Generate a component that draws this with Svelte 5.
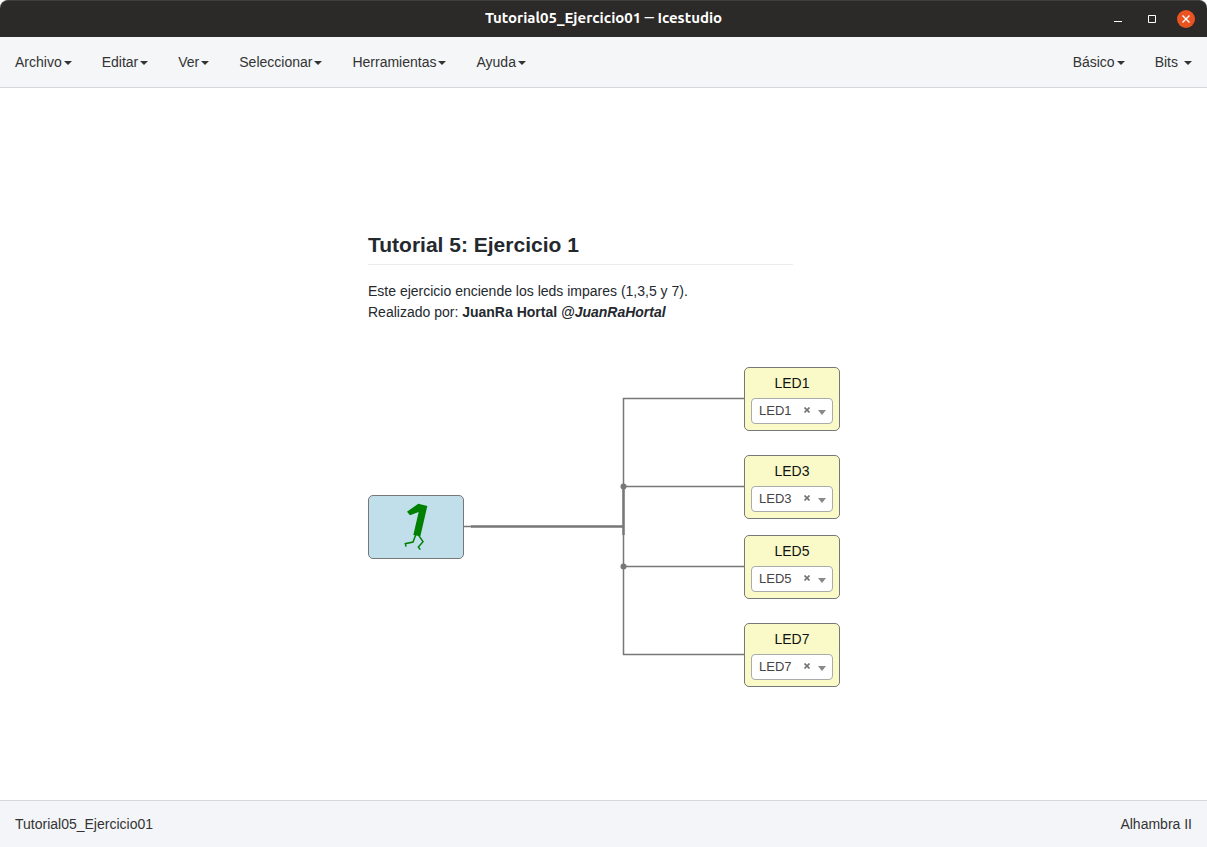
<script>
  const menus = ['Archivo', 'Editar', 'Ver', 'Seleccionar', 'Herramientas', 'Ayuda'];
  const collections = ['Básico', 'Bits'];
  const pins = ['LED1', 'LED3', 'LED5', 'LED7'];

  let outputs = $state([
    { label: 'LED1', pin: 'LED1', x: 744, y: 279 },
    { label: 'LED3', pin: 'LED3', x: 744, y: 367 },
    { label: 'LED5', pin: 'LED5', x: 744, y: 447 },
    { label: 'LED7', pin: 'LED7', x: 744, y: 535 }
  ]);
</script>

<div class="window">
  <header class="titlebar">
    <span></span>
    <h1>Tutorial05_Ejercicio01 ─ Icestudio</h1>
    <div class="controls">
      <button aria-label="Minimizar">
        <svg width="18" height="18" viewBox="0 0 18 18"><path d="M5 11.5h8" stroke="#fff" /></svg>
      </button>
      <button aria-label="Maximizar">
        <svg width="18" height="18" viewBox="0 0 18 18"><path d="M5.5 5.5h7v7h-7z" fill="none" stroke="#fff" /></svg>
      </button>
      <button aria-label="Cerrar">
        <svg width="18" height="18" viewBox="0 0 18 18">
          <circle cx="9" cy="9" r="9" fill="#e95420" />
          <path d="M5.5 5.5l7 7M12.5 5.5l-7 7" stroke="#fff" stroke-width="1.4" />
        </svg>
      </button>
    </div>
  </header>

  <nav class="menubar">
    <div class="menus">
      {#each menus as name}
        <button>{name}<i class="caret"></i></button>
      {/each}
    </div>
    <div class="menus">
      {#each collections as name}
        <button class="collection">{name}<i class="caret"></i></button>
      {/each}
    </div>
  </nav>

  <main class="canvas">
    <svg class="wires" width="1207" height="712" fill="none" stroke="#777">
      <path d="M744 310.5H623.5V566.5H744M623.5 398.5H744M623.5 478.5H744" stroke-width="1.5" />
      <path d="M464 438.5H472" stroke-width="1.5" />
      <path d="M471 438.5H623.5M623.5 398V447" stroke-width="2.4" />
      <g fill="#777" stroke="none">
        <circle cx="623.5" cy="398.5" r="3" />
        <circle cx="623.5" cy="478.5" r="3" />
      </g>
    </svg>

    <article class="note">
      <h2>Tutorial 5: Ejercicio 1</h2>
      <p>
        Este ejercicio enciende los leds impares (1,3,5 y 7).<br />
        Realizado por: <strong>JuanRa Hortal <em>@JuanRaHortal</em></strong>
      </p>
    </article>

    <div class="constant">
      <svg width="94" height="62" viewBox="3 3 282 186" role="img" aria-label="Bit a 1">
        <path d="M151 26L178 33L157 124L136 120L152 51L126 61L117 50Z" fill="#008000" />
        <path
          d="M143 120L135 141L112 146L114 155M152 121L165 140L151 156L157 164"
          fill="none"
          stroke="#008000"
          stroke-width="4.5"
        />
      </svg>
    </div>

    {#each outputs as out, i}
      <div class="output" style:left="{out.x}px" style:top="{out.y}px">
        <label for="pin-{i}">{out.label}</label>
        <div class="pin">
          <select id="pin-{i}" bind:value={out.pin}>
            {#each pins as pin}
              <option>{pin}</option>
            {/each}
          </select>
          <button class="clear" aria-label="Quitar">
            <svg width="6" height="6" viewBox="0 0 6 6"><path d="M.5 .5l5 5M5.5 .5l-5 5" stroke="#777" stroke-width="1.7" /></svg>
          </button>
          <i class="arrow"></i>
        </div>
      </div>
    {/each}
  </main>

  <footer class="statusbar">
    <span>Tutorial05_Ejercicio01</span>
    <span>Alhambra II</span>
  </footer>
</div>

<style>
  :global(body) {
    margin: 0;
    background: #fff;
  }

  .window {
    display: flex;
    flex-direction: column;
    min-height: 100vh;
    font: 14px/20px 'Liberation Sans', Arial, sans-serif;
    color: #333;
  }

  button {
    margin: 0;
    padding: 0;
    border: 0;
    background: none;
    color: inherit;
    font: inherit;
  }

  svg {
    display: block;
  }

  .titlebar {
    display: grid;
    grid-template-columns: 1fr auto 1fr;
    align-items: center;
    box-sizing: border-box;
    height: 37px;
    padding: 0 12px;
    border-top: 1px solid #3f3e3e;
    border-radius: 8px 8px 0 0;
    background: #2c2929;
  }

  h1 {
    margin: 0 0 2px;
    color: #fff;
    font: bold 15px/20px Ubuntu, 'Noto Sans', 'DejaVu Sans Mono', sans-serif;
  }

  .controls {
    display: flex;
    justify-content: flex-end;
    gap: 16px;
  }

  .menubar {
    display: flex;
    justify-content: space-between;
    height: 50px;
    border-bottom: 1px solid #d5d8da;
    background: #f4f6f8;
  }

  .menus {
    display: flex;
  }

  .menus button {
    display: flex;
    align-items: center;
    gap: 2px;
    padding: 0 15px;
  }

  .menus .collection:last-child {
    gap: 6px;
  }

  .caret {
    margin-top: 2px;
    border: 4px solid transparent;
    border-top-color: #333;
    border-bottom: 0;
  }

  .canvas {
    position: relative;
    flex: 1;
    overflow: hidden;
  }

  .wires {
    position: absolute;
    top: 0;
    left: 0;
  }

  .note {
    position: absolute;
    top: 144px;
    left: 368px;
    width: 425px;
    color: #24292e;
  }

  h2 {
    margin: 0 0 16px;
    padding-bottom: 6px;
    border-bottom: 1px solid #eaecef;
    font-size: 21px;
    line-height: 26px;
  }

  p {
    margin: 0;
    line-height: 21px;
  }

  .constant,
  .output {
    position: absolute;
    box-sizing: border-box;
    width: 96px;
    height: 64px;
    border: 1px solid #777;
    border-radius: 5px;
  }

  .constant {
    top: 407px;
    left: 368px;
    background: #c0dfeb;
  }

  .output {
    display: flex;
    flex-direction: column;
    gap: 5px;
    padding: 5px 6px 6px;
    background: #fafac9;
  }

  .output label {
    color: #111;
    text-align: center;
  }

  .pin {
    position: relative;
  }

  .pin select {
    display: block;
    box-sizing: border-box;
    width: 100%;
    height: 26px;
    padding: 0 7px;
    border: 1px solid #aaa;
    border-radius: 4px;
    appearance: none;
    background: #fff;
    color: #444;
    font: 13px/24px 'Liberation Sans', Arial, sans-serif;
  }

  .clear {
    position: absolute;
    top: 9px;
    right: 23px;
  }

  .arrow {
    position: absolute;
    top: 12px;
    right: 7px;
    border: 4px solid transparent;
    border-top: 5px solid #888;
    border-bottom: 0;
    pointer-events: none;
  }

  .statusbar {
    display: flex;
    align-items: center;
    justify-content: space-between;
    height: 46px;
    padding: 0 15px;
    border-top: 1px solid #d5d8da;
    background: #f4f5f8;
  }
</style>
